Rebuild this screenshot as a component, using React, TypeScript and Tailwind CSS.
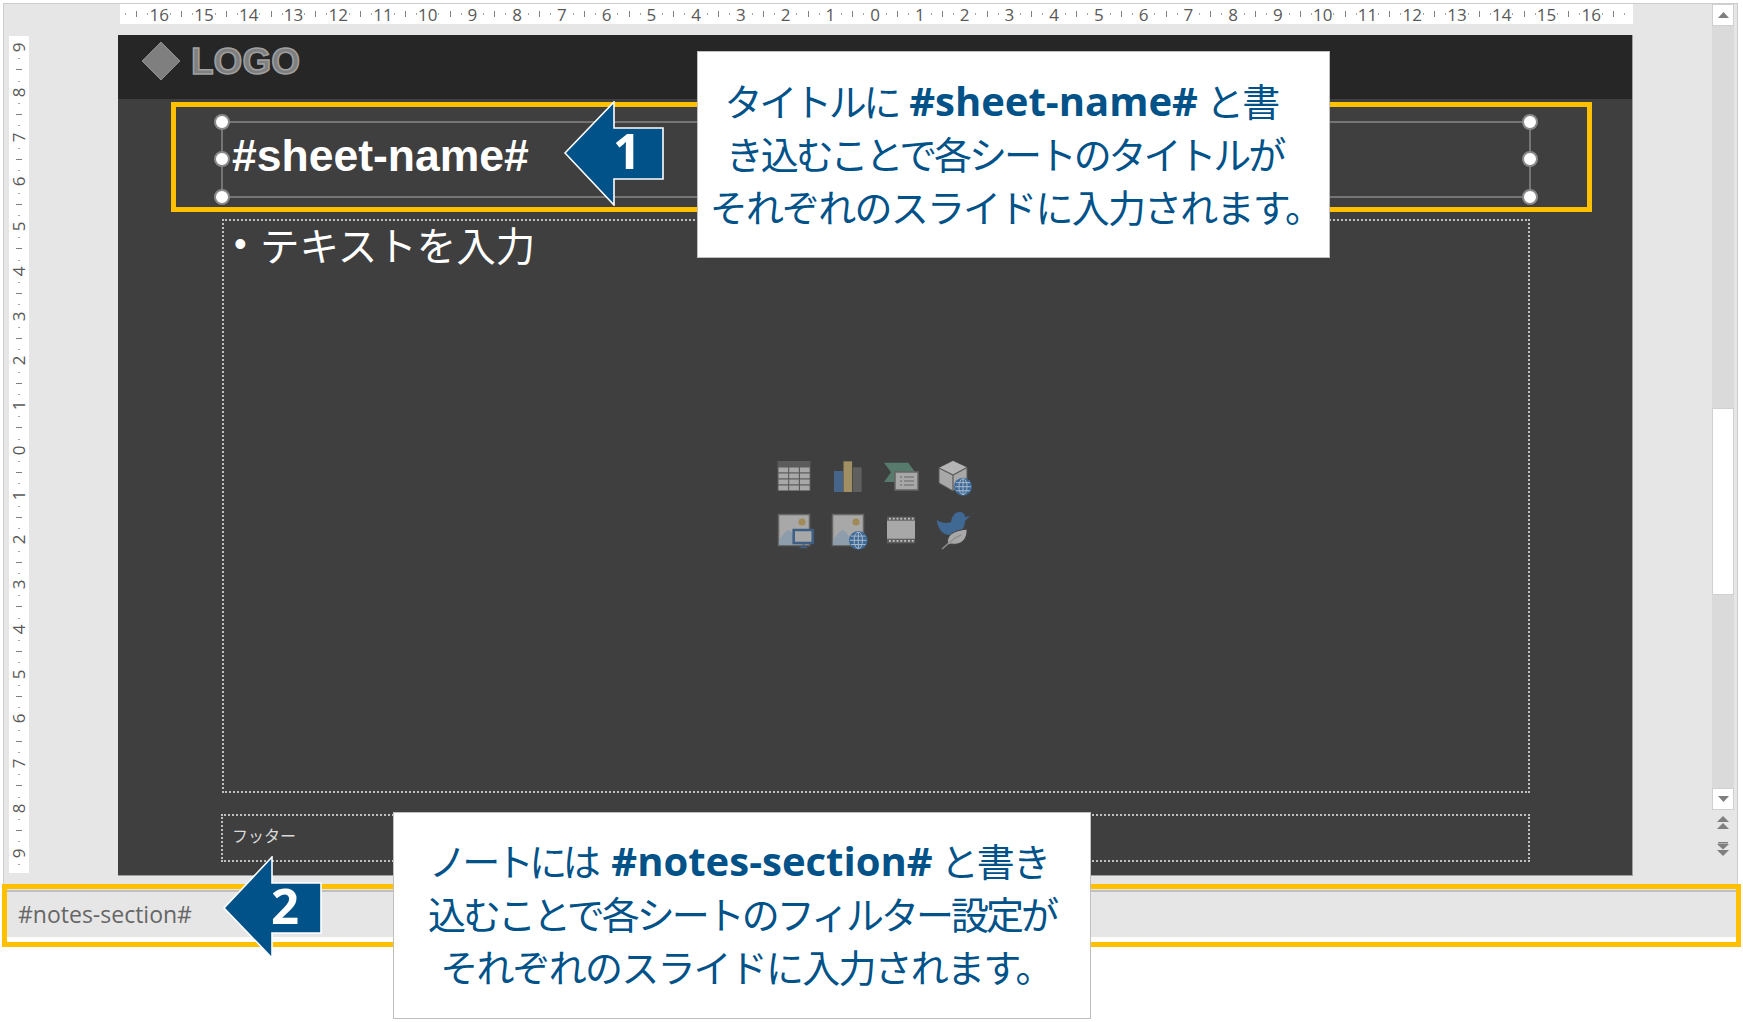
import { Fragment } from 'react';

const UI_FONT = "font-['Open_Sans','Noto_Sans_CJK_JP',sans-serif]";
const JP_FONT = "font-['Noto_Sans_CJK_JP','Open_Sans',sans-serif]";

// quarter steps around the ruler's zero: 0 = number, 2 = long tick, 1/3 = dot
function range(from: number, to: number) {
  const out: number[] = [];
  for (let i = from; i <= to; i++) out.push(i);
  return out;
}

function TopRuler() {
  return (
    <div className="ml-[116px] flex h-[20px] w-[1513px] shrink-0 items-center bg-white">
      {range(-67, 67).map((q) => {
        const step = ((q % 4) + 4) % 4;
        return (
          <div key={q} className="flex h-full w-[11.19px] shrink-0 items-center justify-center">
            {step === 0 && (
              <span className="text-[17px] leading-none text-[#595959]">{Math.abs(q / 4)}</span>
            )}
            {step === 2 && <div className="h-[6px] w-px shrink-0 bg-[#7f7f7f]" />}
            {(step === 1 || step === 3) && <div className="h-[2px] w-px shrink-0 bg-[#a6a6a6]" />}
          </div>
        );
      })}
    </div>
  );
}

function LeftRuler() {
  return (
    <div className="ml-[5px] mt-[1px] flex h-[837px] w-[20px] shrink-0 flex-col items-center bg-white pt-[6px]">
      {range(-36, 37).map((q) => {
        const step = ((q % 4) + 4) % 4;
        return (
          <div key={q} className="flex h-[11.2px] w-full shrink-0 items-center justify-center">
            {step === 0 && (
              <span className="-rotate-90 text-[17px] leading-none text-[#595959]">{Math.abs(q / 4)}</span>
            )}
            {step === 2 && <div className="h-px w-[6px] shrink-0 bg-[#7f7f7f]" />}
            {(step === 1 || step === 3) && <div className="h-px w-[2px] shrink-0 bg-[#a6a6a6]" />}
          </div>
        );
      })}
    </div>
  );
}

function Logo() {
  return (
    <div className="flex items-center pl-[24px] pt-[7px]">
      <svg width="38" height="38" viewBox="0 0 38 38">
        <polygon points="19,0 38,19 19,38 0,19" fill="#7f7f7f" stroke="#8f8f8f" strokeWidth="1" />
      </svg>
      <span className="ml-[11px] font-['Liberation_Sans',sans-serif] text-[37px] font-bold leading-none text-[#7f7f7f] [-webkit-text-stroke:1.5px_#a0a0a0]">
        LOGO
      </span>
    </div>
  );
}

function Handle({ className }: { className: string }) {
  return (
    <div
      className={`absolute h-[16px] w-[16px] rounded-full border-[2.5px] border-[#8a8a8a] bg-white ${className}`}
    />
  );
}

function Globe({ cx, cy, r }: { cx: number; cy: number; r: number }) {
  return (
    <g>
      <circle cx={cx} cy={cy} r={r} fill="#3d6a99" />
      <ellipse cx={cx} cy={cy} rx={r * 0.45} ry={r - 1} fill="none" stroke="#a9b8c6" strokeWidth="1" />
      <path
        d={`M${cx - r + 1} ${cy}H${cx + r - 1}M${cx - r + 2} ${cy - r * 0.45}H${cx + r - 2}M${cx - r + 2} ${cy + r * 0.45}H${cx + r - 2}M${cx} ${cy - r + 1}V${cy + r - 1}`}
        stroke="#a9b8c6"
        strokeWidth="1"
      />
    </g>
  );
}

function PictureFrame() {
  return (
    <g>
      <rect x="2.5" y="1.5" width="31" height="31" fill="#a8a8a8" stroke="#666" strokeWidth="1.5" />
      <circle cx="26" cy="9" r="3.6" fill="#a08a55" />
      <path d="M3 32 L3 27 Q9 18 13 17 Q18 20 24 32 Z" fill="#8d9dab" />
    </g>
  );
}

const contentIcons = [
  // table
  <g key="table">
    <rect x="1.5" y="3" width="33" height="30" fill="#5b5b5b" />
    {[9.5, 15.5, 21.5, 27.5].map((y) =>
      [2.5, 13.2, 24].map((x) => <rect key={`${x}-${y}`} x={x} y={y} width="9.6" height="4.8" fill="#a8a8a8" />),
    )}
  </g>,
  // chart
  <g key="chart">
    <rect x="4" y="13" width="9" height="21" fill="#45668a" />
    <rect x="13.5" y="3.3" width="8.6" height="30.7" fill="#a08f63" />
    <rect x="23" y="9.3" width="8.6" height="24.7" fill="#5f5f5f" />
  </g>,
  // smartart
  <g key="smartart">
    <polygon points="1,4.7 25.3,4.7 32,14 12,14 12,24 1,24 8,14.3" fill="#567a6c" />
    <rect x="12" y="14" width="23" height="18" fill="#a8a8a8" stroke="#666" strokeWidth="1.5" />
    <path d="M17 19H19M21 19H31M17 23H19M21 23H31M17 27H19M21 27H31" stroke="#666" strokeWidth="1" />
  </g>,
  // 3d model
  <g key="model">
    <polygon points="16,3 30,9.5 30,25 16,33 2,25 2,10" fill="#a8a8a8" stroke="#5a5a5a" strokeWidth="1" />
    <polygon points="16,3 30,9.5 16,16.5 2,10" fill="#b5b5b5" />
    <path d="M2 10L16 17L30 9.5M16 17V33" stroke="#5a5a5a" strokeWidth="1.2" fill="none" />
    <Globe cx={26} cy={28.7} r={9} />
  </g>,
  // picture from file
  <g key="picture">
    <PictureFrame />
    <rect x="17.7" y="17" width="19" height="13" fill="#a8a8a8" stroke="#3d5f85" strokeWidth="2.5" />
    <path d="M27.5 31V34M23.5 34.5H31.5" stroke="#3d5f85" strokeWidth="1.4" />
  </g>,
  // online picture
  <g key="online">
    <PictureFrame />
    <Globe cx={28.3} cy={27.3} r={9.3} />
  </g>,
  // video
  <g key="video">
    <rect x="4" y="3.7" width="28" height="26.6" fill="#5f5f5f" />
    <rect x="4" y="7.7" width="28" height="18" fill="#a8a8a8" />
    {[6, 9.8, 13.6, 17.4, 21.2, 25, 28.8].map((x) => (
      <Fragment key={x}>
        <rect x={x} y="4.8" width="1.8" height="1.8" fill="#c4c4c4" />
        <rect x={x} y="27" width="1.8" height="1.8" fill="#c4c4c4" />
      </Fragment>
    ))}
  </g>,
  // bird and leaf
  <g key="bird">
    <path
      d="M-0.3 7 C5 10 9 11 14 9 C15 3 18 -1 22 -1 C26 -1 28 1 28 4 L33 3 L28 8 C28 15 24 20 15 22 C6 23 1 16 -0.3 7Z"
      fill="#3f6893"
    />
    <path d="M11 32 C9 24 13 18 30 16 C31 26 24 33 14 31Z" fill="#a8a8a8" stroke="#3f3f3f" strokeWidth="1" />
    <path d="M5 36L13 29C16 26 19 24 24 22" stroke="#8f8f8f" strokeWidth="1.5" fill="none" />
  </g>,
];

function Slide() {
  return (
    <div className="ml-[89px] flex h-[841px] w-[1515px] shrink-0 flex-col border-b border-r border-[#a0a0a0]">
      <div className="h-[64px] shrink-0 bg-[#262626]">
        <Logo />
      </div>
      <div className="flex flex-1 flex-col bg-[#3f3f3f] pl-[103px] pr-[101px] pt-[22px]">
        <div className="relative flex h-[77px] shrink-0 items-center border-2 border-[#757575] pb-[6px] pl-[9px]">
          <Handle className="-left-[9px] -top-[9px]" />
          <Handle className="-left-[9px] top-[28px]" />
          <Handle className="-bottom-[9px] -left-[9px]" />
          <Handle className="-right-[9px] -top-[9px]" />
          <Handle className="-right-[9px] top-[28px]" />
          <Handle className="-bottom-[9px] -right-[9px]" />
          <span className="font-['Liberation_Sans',sans-serif] text-[44.5px] font-bold leading-none text-white">
            #sheet-name#
          </span>
        </div>
        <div className="relative ml-[1px] mr-[1px] mt-[21px] h-[574px] shrink-0 border-2 border-dotted border-[#c0c0c0] pl-[10px]">
          <div className={`-mt-[3px] flex items-center text-white ${JP_FONT} text-[39.5px] leading-[52px]`}>
            <span className="w-[26px] font-['Liberation_Sans',sans-serif] text-[36px]">•</span>
            <span>テキストを入力</span>
          </div>
          <div className="absolute inset-0 flex items-center justify-center pb-[5px] pr-[3px]">
            <div className="grid grid-cols-[repeat(4,53.5px)] grid-rows-[55px_55px] place-items-center">
              {contentIcons.map((icon, i) => (
                <svg key={i} width="44" height="44" viewBox="-4 -4 44 44">
                  {icon}
                </svg>
              ))}
            </div>
          </div>
        </div>
        <div className="mr-[1px] mt-[21px] flex h-[48px] shrink-0 items-center border-2 border-dotted border-[#c0c0c0] pb-[6px] pl-[9px]">
          <span className={`${JP_FONT} text-[16px] text-[#d9d9d9]`}>フッター</span>
        </div>
      </div>
    </div>
  );
}

function Scrollbar() {
  const button = 'flex h-[22px] w-[22px] shrink-0 items-center justify-center border border-[#d0d0d0] bg-white';
  return (
    <div className="flex w-[22px] shrink-0 flex-col">
      <div className={button}>
        <svg width="11" height="6" viewBox="0 0 11 6">
          <polygon points="5.5,0 11,6 0,6" fill="#7f7f7f" />
        </svg>
      </div>
      <div className="flex h-[762px] flex-col bg-[#dadada] pt-[382px]">
        <div className="h-[187px] w-[22px] border border-[#d0d0d0] bg-white" />
      </div>
      <div className={button}>
        <svg width="11" height="6" viewBox="0 0 11 6">
          <polygon points="0,0 11,0 5.5,6" fill="#7f7f7f" />
        </svg>
      </div>
      <div className="mt-[6px] flex justify-center">
        <svg width="12" height="14" viewBox="0 0 12 14">
          <polygon points="6,0 12,6 0,6" fill="#7f7f7f" />
          <polygon points="6,7 12,13 0,13" fill="#7f7f7f" />
        </svg>
      </div>
      <div className="mt-[12px] flex justify-center">
        <svg width="12" height="14" viewBox="0 0 12 14">
          <rect x="1" y="0" width="10" height="1.5" fill="#7f7f7f" />
          <polygon points="0,2 12,2 6,7.5" fill="#7f7f7f" />
          <polygon points="0,8 12,8 6,14" fill="#7f7f7f" />
        </svg>
      </div>
    </div>
  );
}

function Arrow({ className, label, labelClass, width, height, points }: {
  className: string;
  label: string;
  labelClass: string;
  width: number;
  height: number;
  points: string;
}) {
  return (
    <div className={`absolute ${className}`} style={{ width, height }}>
      <svg width={width} height={height} viewBox={`0 0 ${width} ${height}`}>
        <polygon points={points} fill="#005288" stroke="#ffffff" strokeWidth="1.6" />
      </svg>
      <span className={`absolute font-['Open_Sans',sans-serif] text-[49px] font-bold leading-none text-white ${labelClass}`}>
        {label}
      </span>
    </div>
  );
}

function Callout({ className, children }: { className: string; children: React.ReactNode }) {
  return (
    <div
      className={`absolute flex flex-col items-center justify-center border border-[#bfbfbf] bg-white text-[38px] leading-[53px] text-[#005288] ${UI_FONT} ${className}`}
    >
      {children}
    </div>
  );
}

export default function App() {
  return (
    <div className="relative h-[1022px] w-[1743px] overflow-hidden bg-white pt-[3px]">
      {/* editor window */}
      <div className="ml-[3px] flex h-[887px] w-[1735px] border-x border-t border-[#cdcdcd] bg-[#e6e6e6]">
        <div className={`flex w-[1708px] shrink-0 flex-col ${UI_FONT}`}>
          <TopRuler />
          <div className="mt-[11px] flex items-start">
            <LeftRuler />
            <Slide />
          </div>
        </div>
        <Scrollbar />
      </div>

      {/* notes pane */}
      <div className="ml-[3px] flex h-[47px] w-[1735px] items-center border-t-2 border-[#bfbfbf] bg-[#e6e6e6] pb-[1px] pl-[15px]">
        <span className={`${UI_FONT} text-[23px] leading-none text-[#666666]`}>#notes-section#</span>
      </div>

      {/* highlights and callouts */}
      <div className="absolute left-[171px] top-[102px] h-[110px] w-[1421px] border-[5px] border-[#ffc000]" />
      <div className="absolute left-[2px] top-[884px] h-[63px] w-[1739px] border-[5px] border-[#ffc000]" />

      <Arrow
        className="left-[564px] top-[101px]"
        width={100}
        height={105}
        points="1,52 50,1 50,27 99,27 99,78 50,78 50,104"
        label="1"
        labelClass="left-[49px] top-[25px]"
      />
      <Arrow
        className="left-[223px] top-[856px]"
        width={100}
        height={103}
        points="1,52 49,1 49,27 98,27 98,77 49,77 49,102"
        label="2"
        labelClass="left-[48px] top-[25px]"
      />

      <Callout className="left-[697px] top-[51px] h-[207px] w-[633px] pb-[2px]">
        <div className="mr-[24px] whitespace-nowrap tracking-[-1.8px]">
          <span className="tracking-[-3.3px]">タイトルに</span>{' '}
          <span className="ml-[3px] text-[40px] font-bold tracking-normal">#sheet-name#</span> と書
        </div>
        <div className="mr-[18px] whitespace-nowrap tracking-[-3.1px]">き込むことで各シートのタイトルが</div>
        <div className="ml-[4px] whitespace-nowrap tracking-[-1.8px]">それぞれのスライドに入力されます。</div>
      </Callout>
      <Callout className="left-[393px] top-[812px] h-[207px] w-[698px] pb-[4px]">
        <div className="mr-[6px] whitespace-nowrap tracking-[-1.8px]">
          <span className="tracking-[-4.5px]">ノートには</span>{' '}
          <span className="ml-[7px] text-[40px] font-bold tracking-normal">#notes-section#</span> と書き
        </div>
        <div className="whitespace-nowrap tracking-[-3px]">込むことで各シートのフィルター設定が</div>
        <div className="ml-[8px] whitespace-nowrap tracking-[-1.8px]">それぞれのスライドに入力されます。</div>
      </Callout>
    </div>
  );
}
